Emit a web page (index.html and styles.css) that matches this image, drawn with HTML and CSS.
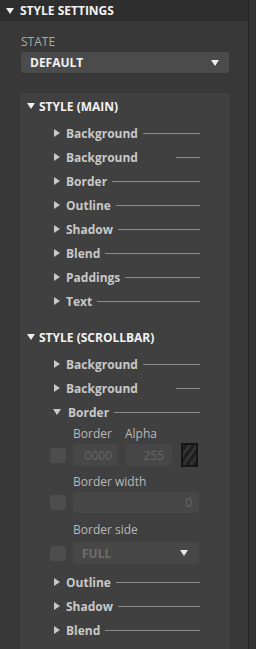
FILE: index.html
```html
<!DOCTYPE html>
<html lang="en">
<head>
    <meta charset="UTF-8">
    <meta name="viewport" content="width=device-width, initial-scale=1.0">
    <title>Style Settings</title>
    <link rel="stylesheet" href="styles.css">
</head>
<body>
    <div class="frame">
        <div class="panel">
            <div class="panel-head"><span class="tri-down"></span>STYLE SETTINGS</div>
            <div class="panel-body">
                <div class="state-label">STATE</div>
                <div class="select state-select"><span>DEFAULT</span><span class="tri-down"></span></div>

                <div class="box">
                    <div class="group">
                        <div class="group-head"><span class="tri-down"></span>STYLE (MAIN)</div>
                        <div class="items">
                            <div class="item"><span class="tri-right"></span><span class="name">Background</span><span class="rule"></span></div>
                            <div class="item"><span class="tri-right"></span><span class="name">Background</span><span class="rule short"></span></div>
                            <div class="item"><span class="tri-right"></span><span class="name">Border</span><span class="rule"></span></div>
                            <div class="item"><span class="tri-right"></span><span class="name">Outline</span><span class="rule"></span></div>
                            <div class="item"><span class="tri-right"></span><span class="name">Shadow</span><span class="rule"></span></div>
                            <div class="item"><span class="tri-right"></span><span class="name">Blend</span><span class="rule"></span></div>
                            <div class="item"><span class="tri-right"></span><span class="name">Paddings</span><span class="rule"></span></div>
                            <div class="item"><span class="tri-right"></span><span class="name">Text</span><span class="rule"></span></div>
                        </div>
                    </div>

                    <div class="group group-second">
                        <div class="group-head"><span class="tri-down"></span>STYLE (SCROLLBAR)</div>
                        <div class="items">
                            <div class="item"><span class="tri-right"></span><span class="name">Background</span><span class="rule"></span></div>
                            <div class="item"><span class="tri-right"></span><span class="name">Background</span><span class="rule short"></span></div>
                            <div class="item"><span class="tri-down small"></span><span class="name">Border</span><span class="rule"></span></div>

                            <div class="props">
                                <div class="prop-labels">
                                    <span class="lbl lbl-color">Border</span>
                                    <span class="lbl">Alpha</span>
                                </div>
                                <div class="prop-row">
                                    <span class="check"></span>
                                    <span class="field field-color">0000</span>
                                    <span class="field field-alpha">255</span>
                                    <span class="swatch"></span>
                                </div>
                                <div class="prop-labels gap-a"><span class="lbl">Border width</span></div>
                                <div class="prop-row row-b">
                                    <span class="check"></span>
                                    <span class="field field-wide">0</span>
                                </div>
                                <div class="prop-labels gap-b"><span class="lbl">Border side</span></div>
                                <div class="prop-row row-c">
                                    <span class="check"></span>
                                    <span class="select field-select"><span>FULL</span><span class="tri-down"></span></span>
                                </div>
                            </div>

                            <div class="item"><span class="tri-right"></span><span class="name">Outline</span><span class="rule"></span></div>
                            <div class="item"><span class="tri-right"></span><span class="name">Shadow</span><span class="rule"></span></div>
                            <div class="item"><span class="tri-right"></span><span class="name">Blend</span><span class="rule"></span></div>
                        </div>
                    </div>
                </div>
            </div>
        </div>
        <div class="edge"></div>
    </div>
</body>
</html>
```

FILE: styles.css
```css
body {
    margin: 0;
    padding: 0;
    background-color: #383838;
    font-family: "Open Sans", "Liberation Sans", sans-serif;
    color: #c8c8c8;
}
.frame {
    display: flex;
    height: 649px;
    overflow: hidden;
}
.panel {
    width: 248px;
    background-color: #383838;
}
.edge {
    width: 7px;
    background-color: #333;
    border-left: 1px solid #222;
}

/* triangles */
.tri-down {
    display: inline-block;
    width: 0;
    height: 0;
    border-left: 4px solid transparent;
    border-right: 4px solid transparent;
    border-top: 6px solid #eee;
}
.tri-down.small {
    border-top: 6px solid #c8c8c8;
}
.tri-right {
    display: inline-block;
    width: 0;
    height: 0;
    border-top: 4px solid transparent;
    border-bottom: 4px solid transparent;
    border-left: 6px solid #c8c8c8;
}

.panel-head {
    height: 21px;
    display: flex;
    align-items: center;
    background-color: #2e2e2e;
    color: #f2f2f2;
    font-weight: bold;
    font-size: 12px;
}
.panel-head .tri-down {
    margin: 0 6px 0 6px;
}
.panel-body {
    padding: 14px 18px 0 20px;
}
.state-label {
    font-size: 12px;
    line-height: 14px;
    color: #a9a9a9;
    margin-left: 1px;
}
.select {
    display: flex;
    align-items: center;
    justify-content: space-between;
    background-color: #4b4b4b;
    border-radius: 3px;
    font-weight: bold;
    font-size: 12px;
}
.state-select {
    margin: 3px 1px 0 1px;
    height: 21px;
    padding: 0 10px 0 9px;
    color: #f2f2f2;
}
.box {
    margin-top: 20px;
    background-color: #404040;
    padding-bottom: 12px;
}
.group-head {
    height: 26px;
    display: flex;
    align-items: center;
    font-weight: bold;
    font-size: 12px;
    color: #f2f2f2;
}
.group-head .tri-down {
    margin: 0 4px 0 7px;
}
.group-second {
    margin-top: 11px;
}
.items {
    padding-top: 2px;
}
.item {
    height: 24px;
    display: flex;
    align-items: center;
    padding-left: 34px;
    font-weight: bold;
    font-size: 12px;
}
.item .tri-right {
    margin-right: 6px;
}
.item .tri-down {
    margin-left: -1px;
    margin-right: 7px;
}
.name {
    color: #c8c8c8;
}
.rule {
    flex: 1;
    height: 1px;
    background-color: #8a8a8a;
    margin: 0 30px 0 5px;
}
.rule.short {
    margin-left: 38px;
}

/* expanded border props */
.props {
    padding: 0 0 6px 30px;
}
.prop-labels {
    height: 18px;
    display: flex;
    align-items: center;
    padding-left: 23px;
    font-size: 12px;
    color: #b9b9b9;
}
.lbl-color {
    width: 52px;
}
.gap-a {
    margin-top: 6px;
}
.gap-b {
    margin-top: 7px;
}
.prop-row {
    display: flex;
    align-items: center;
    margin-top: 2px;
    height: 22px;
}
.row-b {
    height: 21px;
}
.row-c {
    margin-top: 4px;
    height: 22px;
}
.check {
    width: 16px;
    height: 15px;
    border-radius: 3px;
    background-color: #4d4d4d;
    margin-right: 7px;
}
.field {
    height: 22px;
    box-sizing: border-box;
    background-color: #474747;
    border-radius: 3px;
    color: #666;
    font-size: 12px;
    display: flex;
    align-items: center;
    justify-content: flex-end;
    padding-right: 6px;
}
.row-b .field {
    height: 21px;
}
.field-color {
    width: 45px;
}
.field-alpha {
    width: 46px;
    margin-left: 8px;
    padding-right: 8px;
}
.field-wide {
    width: 126px;
    padding-right: 7px;
}
.swatch {
    width: 17px;
    height: 24px;
    box-sizing: border-box;
    margin-left: 9px;
    border: 2px solid #161616;
    background: repeating-linear-gradient(-55deg, #1e1e1e 0 3px, #333 3px 6px);
}
.field-select {
    width: 126px;
    height: 22px;
    box-sizing: border-box;
    padding: 0 11px 0 9px;
    background-color: #474747;
    color: #6e6e6e;
}
.field-select .tri-down {
    border-top-color: #e6e6e6;
}
```
